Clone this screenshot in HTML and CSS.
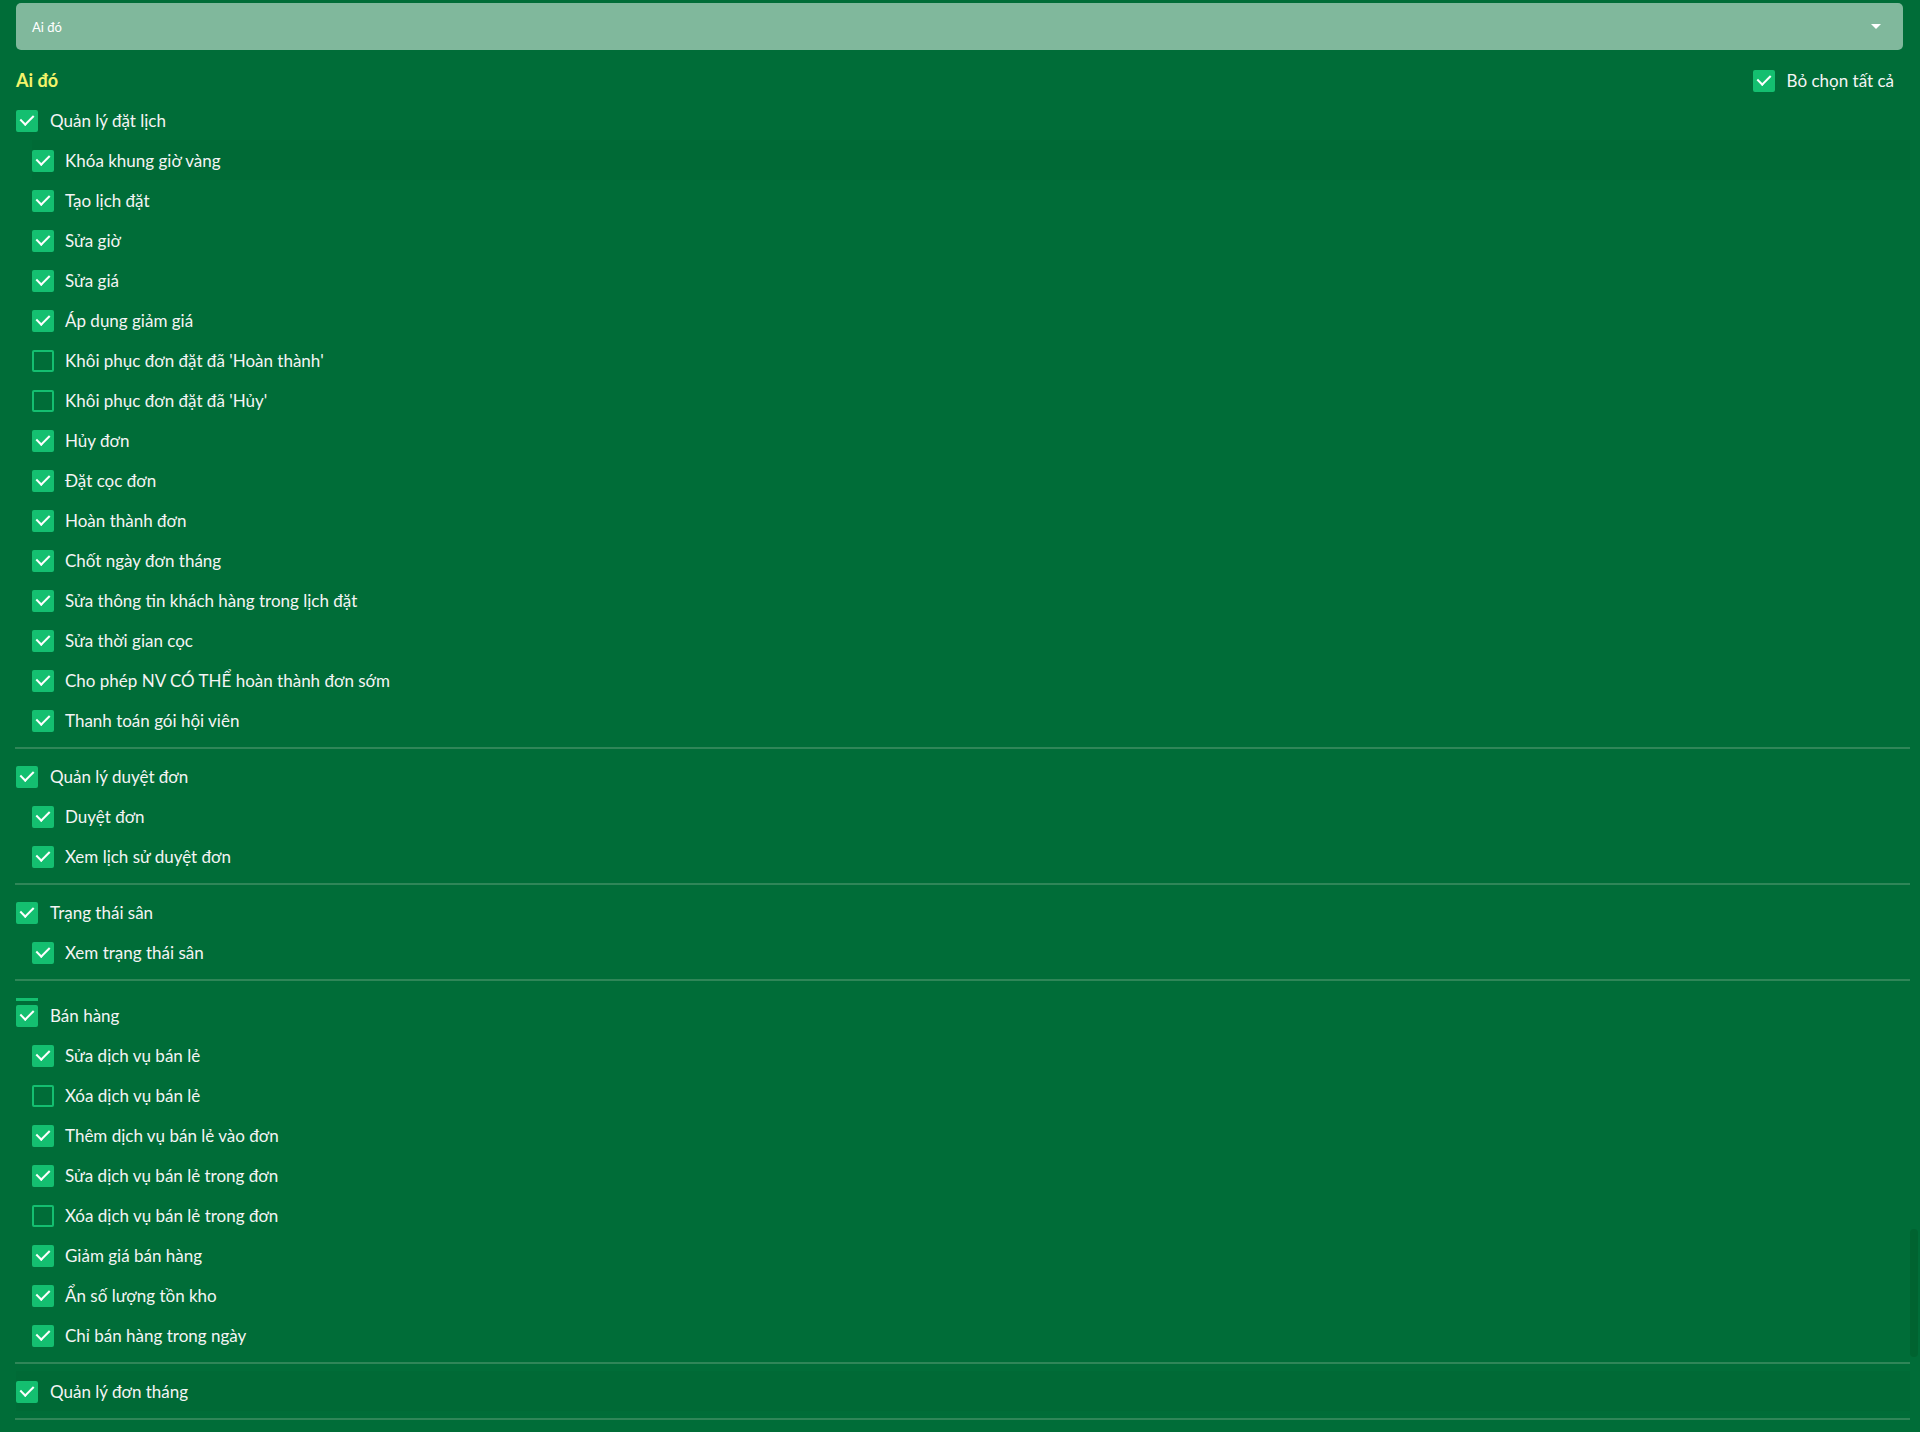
FILE: index.html
```html
<!DOCTYPE html>
<html>
  <head>
    <title>Phân quyền</title>
    <link rel="stylesheet" href="styles.css">
  </head>
  <body>
    <div class="page">
      <div class="select-box">
        <span>Ai đó</span>
        <i class="caret"></i>
      </div>

      <div class="title-row">
        <h2>Ai đó</h2>
        <label class="row"><span class="cb on"></span>Bỏ chọn tất cả</label>
      </div>

      <div class="group">
        <label class="row head"><span class="cb on"></span>Quản lý đặt lịch</label>
        <label class="row sub hover"><span class="cb on"></span>Khóa khung giờ vàng</label>
        <label class="row sub"><span class="cb on"></span>Tạo lịch đặt</label>
        <label class="row sub"><span class="cb on"></span>Sửa giờ</label>
        <label class="row sub"><span class="cb on"></span>Sửa giá</label>
        <label class="row sub"><span class="cb on"></span>Áp dụng giảm giá</label>
        <label class="row sub"><span class="cb"></span>Khôi phục đơn đặt đã 'Hoàn thành'</label>
        <label class="row sub"><span class="cb"></span>Khôi phục đơn đặt đã 'Hủy'</label>
        <label class="row sub"><span class="cb on"></span>Hủy đơn</label>
        <label class="row sub"><span class="cb on"></span>Đặt cọc đơn</label>
        <label class="row sub"><span class="cb on"></span>Hoàn thành đơn</label>
        <label class="row sub"><span class="cb on"></span>Chốt ngày đơn tháng</label>
        <label class="row sub"><span class="cb on"></span>Sửa thông tin khách hàng trong lịch đặt</label>
        <label class="row sub"><span class="cb on"></span>Sửa thời gian cọc</label>
        <label class="row sub"><span class="cb on"></span>Cho phép NV CÓ THỂ hoàn thành đơn sớm</label>
        <label class="row sub"><span class="cb on"></span>Thanh toán gói hội viên</label>
      </div>
      <hr>
      <div class="group">
        <label class="row head"><span class="cb on"></span>Quản lý duyệt đơn</label>
        <label class="row sub"><span class="cb on"></span>Duyệt đơn</label>
        <label class="row sub"><span class="cb on"></span>Xem lịch sử duyệt đơn</label>
      </div>
      <hr>
      <div class="group">
        <label class="row head"><span class="cb on"></span>Trạng thái sân</label>
        <label class="row sub"><span class="cb on"></span>Xem trạng thái sân</label>
      </div>
      <hr>
      <div class="group">
        <label class="row head dragged"><span class="cb on"></span>Bán hàng</label>
        <label class="row sub"><span class="cb on"></span>Sửa dịch vụ bán lẻ</label>
        <label class="row sub"><span class="cb"></span>Xóa dịch vụ bán lẻ</label>
        <label class="row sub"><span class="cb on"></span>Thêm dịch vụ bán lẻ vào đơn</label>
        <label class="row sub"><span class="cb on"></span>Sửa dịch vụ bán lẻ trong đơn</label>
        <label class="row sub"><span class="cb"></span>Xóa dịch vụ bán lẻ trong đơn</label>
        <label class="row sub"><span class="cb on"></span>Giảm giá bán hàng</label>
        <label class="row sub"><span class="cb on"></span>Ẩn số lượng tồn kho</label>
        <label class="row sub"><span class="cb on"></span>Chỉ bán hàng trong ngày</label>
      </div>
      <hr>
      <div class="group">
        <label class="row head hover"><span class="cb on"></span>Quản lý đơn tháng</label>
      </div>
      <hr>
    </div>
    <div class="scroll-thumb"></div>
  </body>
</html>
```

FILE: styles.css
```css
html, body {
  margin: 0;
  height: 100%;
  overflow: hidden;
  background: #006d38;
}
body {
  font-family: Lato, 'Noto Sans', sans-serif;
  color: #f4f4f4;
}
.page {
  padding: 3px 10px 0 15px;
}
.select-box {
  display: flex;
  align-items: center;
  justify-content: space-between;
  height: 47px;
  margin: 0 7px 0 1px;
  padding: 0 22px 0 16px;
  background: #80b89c;
  border-radius: 5px;
  font-size: 13px;
  color: #fff;
}
.caret {
  width: 0;
  height: 0;
  border-left: 5px solid transparent;
  border-right: 5px solid transparent;
  border-top: 5px solid #fff;
}
.title-row {
  display: flex;
  align-items: center;
  justify-content: space-between;
  height: 40px;
  margin: 10px 16px 0 1px;
}
.title-row h2 {
  margin: 0;
  font-size: 18px;
  font-weight: 700;
  color: #f3f46b;
}
.row {
  display: flex;
  align-items: center;
  gap: 12px;
  height: 40px;
  font-size: 17px;
  cursor: pointer;
}
.row.head {
  margin-left: 1px;
}
.row.sub {
  margin-left: 17px;
  gap: 11px;
}
.row.hover {
  background: #006a36;
}
.row.dragged {
  height: 47px;
  padding-top: 7px;
  box-sizing: border-box;
}
.row.dragged .cb::before {
  content: "";
  position: absolute;
  left: -2px;
  top: -9px;
  width: 22px;
  height: 3px;
  background: #14bf70;
}
.cb {
  position: relative;
  flex: none;
  width: 22px;
  height: 22px;
  box-sizing: border-box;
  border: 2px solid #14bf70;
  border-radius: 2px;
  margin-top: 2px;
}
.cb.on {
  background: #14bf70;
}
.cb.on::after {
  content: "";
  position: absolute;
  left: 5px;
  top: 0;
  width: 6px;
  height: 11px;
  border: solid #fff;
  border-width: 0 2.5px 2.5px 0;
  transform: rotate(45deg);
}
hr {
  margin: 7px 0;
  border: 0;
  height: 2px;
  background: #2f8658;
}
.scroll-thumb {
  position: absolute;
  left: 1910px;
  top: 1229px;
  width: 8px;
  height: 128px;
  border-radius: 4px;
  background: #006330;
}
```
